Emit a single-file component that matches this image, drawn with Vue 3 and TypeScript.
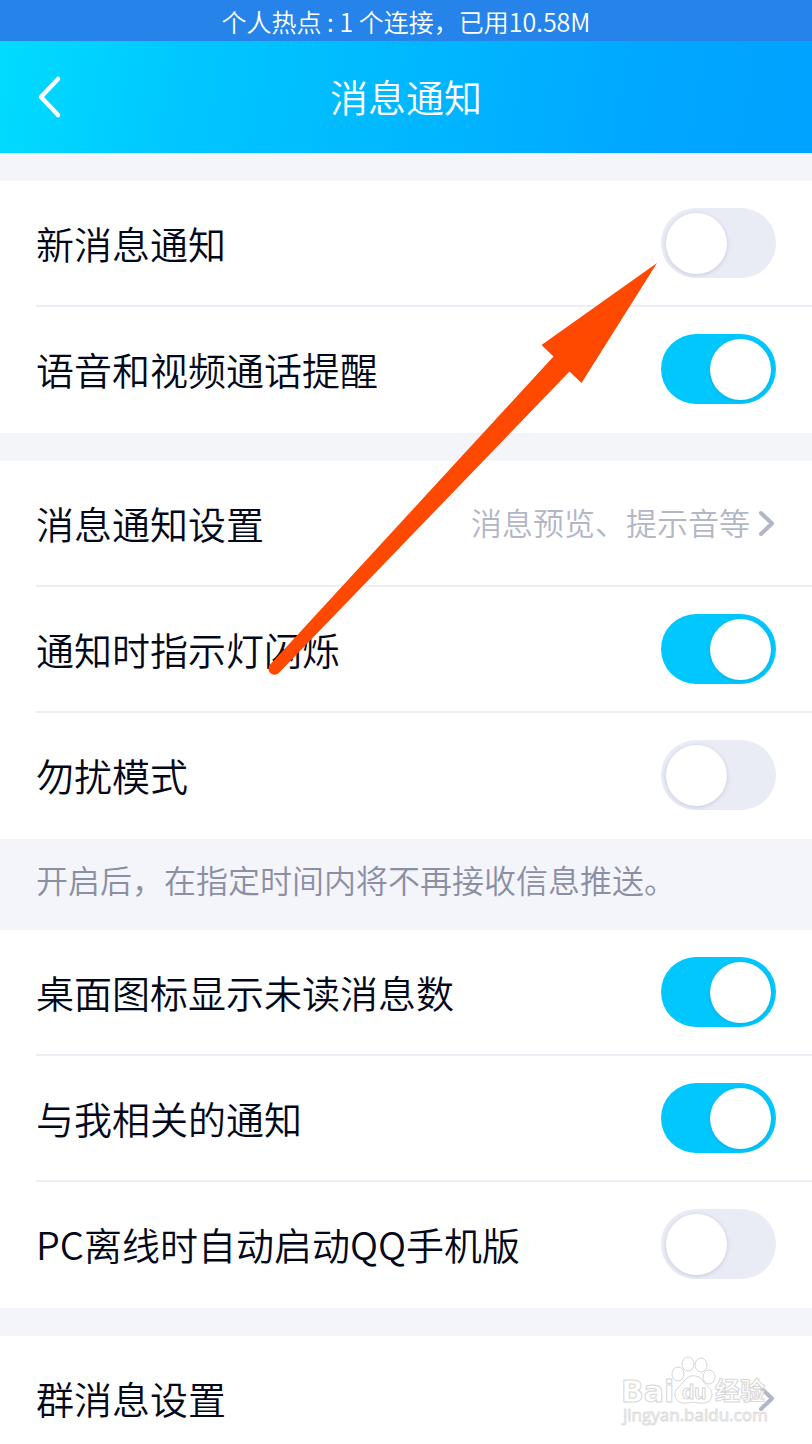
<script setup lang="ts">
import { reactive } from 'vue'

interface Item {
  id: string
  label: string
  kind: 'switch' | 'link'
  on?: boolean
  detail?: string
}

interface Section {
  items: Item[]
  note?: string
}

const sections = reactive<Section[]>([
  {
    items: [
      { id: 'new-message', label: '新消息通知', kind: 'switch', on: false },
      { id: 'calls', label: '语音和视频通话提醒', kind: 'switch', on: true },
    ],
  },
  {
    items: [
      { id: 'settings', label: '消息通知设置', kind: 'link', detail: '消息预览、提示音等' },
      { id: 'led', label: '通知时指示灯闪烁', kind: 'switch', on: true },
      { id: 'dnd', label: '勿扰模式', kind: 'switch', on: false },
    ],
    note: '开启后，在指定时间内将不再接收信息推送。',
  },
  {
    items: [
      { id: 'badge', label: '桌面图标显示未读消息数', kind: 'switch', on: true },
      { id: 'related', label: '与我相关的通知', kind: 'switch', on: true },
      { id: 'pc-offline', label: 'PC离线时自动启动QQ手机版', kind: 'switch', on: false },
    ],
  },
  {
    items: [{ id: 'group', label: '群消息设置', kind: 'link' }],
  },
])
</script>

<template>
  <div class="page">
    <div class="status">个人热点 : 1 个连接，已用10.58M</div>
    <header class="bar">
      <button class="back" type="button" aria-label="返回">
        <svg width="28" height="44" viewBox="0 0 28 44" fill="none">
          <path d="M23 4 6 22l17 18" stroke="#fff" stroke-width="4.500" stroke-linecap="round" stroke-linejoin="round" />
        </svg>
      </button>
      <h1 class="title">消息通知</h1>
    </header>

    <main class="content">
      <template v-for="(section, i) in sections" :key="i">
        <section class="group">
          <template v-for="item in section.items" :key="item.id">
            <label v-if="item.kind === 'switch'" class="row" :for="item.id">
              <span class="name">{{ item.label }}</span>
              <input :id="item.id" v-model="item.on" class="switch" type="checkbox" />
            </label>
            <a v-else class="row" :href="'#' + item.id">
              <span class="name">{{ item.label }}</span>
              <span v-if="item.detail" class="detail">{{ item.detail }}</span>
              <svg class="chevron" width="20" height="30" viewBox="0 0 20 30" fill="none">
                <path d="M5 5l11 10.500L5 26" stroke="#b3b6c6" stroke-width="4" stroke-linecap="round" stroke-linejoin="round" />
              </svg>
            </a>
          </template>
        </section>
        <p v-if="section.note" class="note">{{ section.note }}</p>
        <div v-else class="gap"></div>
      </template>
    </main>

    <svg class="pointer" width="390" height="412" viewBox="0 0 390 412" aria-hidden="true">
      <path d="M390 0 274.500 82l12 11.500L3.200 401.500a6 6 0 0 0 8.600 8.600L302.500 108.500l12 11.500z" fill="#ff4800" />
    </svg>

    <svg class="watermark" width="160" height="76" viewBox="0 0 160 76" aria-hidden="true">
      <g class="outline">
        <text class="brand wide" x="3" y="48" font-size="30">Bai</text>
        <ellipse cx="60" cy="20" rx="6" ry="7" />
        <ellipse cx="70" cy="10" rx="6" ry="7" />
        <ellipse cx="83" cy="11" rx="6" ry="7" />
        <ellipse cx="91" cy="23" rx="6" ry="7" />
        <path d="M66 27c5-7 14-7 19 0 2 4 9 7 9 13 0 8-7 10-13 9-4-1-7-1-11 0-6 1-13-1-13-9 0-6 7-9 9-13z" />
        <text class="brand" x="64" y="45" font-size="20">du</text>
        <text class="brand" x="97" y="46" font-size="25">经验</text>
      </g>
      <text class="site" x="5" y="67" font-size="17">jingyan.baidu.com</text>
    </svg>
  </div>
</template>

<style>
body {
  margin: 0;
}
</style>

<style scoped>
.page {
  position: relative;
  display: flex;
  flex-direction: column;
  height: 100vh;
  overflow: hidden;
  background: #f4f5fa;
  color: #03081a;
  font-family: "Noto Sans CJK SC", sans-serif;
  font-weight: 350;
}

.status {
  flex: none;
  height: 41px;
  background: #2683e9;
  color: #fff;
  font-size: 25px;
  line-height: 42px;
  text-align: center;
}

.bar {
  flex: none;
  display: grid;
  grid-template-columns: 100px 1fr 100px;
  align-items: center;
  height: 112px;
  background: linear-gradient(100deg, #00dcff 0%, #00c6ff 24%, #00b8ff 50%, #00a6ff 82%, #00a3ff 100%);
  color: #fff;
}

.back {
  display: flex;
  align-items: center;
  height: 100%;
  padding: 0 0 0 35px;
  border: 0;
  background: none;
}

.title {
  margin: 0;
  padding-bottom: 2px;
  font-size: 38px;
  font-weight: 350;
  line-height: 56px;
  text-align: center;
}

.content {
  flex: 1;
  min-height: 0;
  padding-top: 28px;
  overflow: hidden;
}

.group {
  padding-left: 36px;
  background: #fff;
}

.row {
  display: flex;
  align-items: center;
  box-sizing: border-box;
  height: 126px;
  padding-right: 36px;
  border-bottom: 2px solid #ecedf5;
  color: inherit;
  text-decoration: none;
}

.row:last-child {
  border-bottom-color: transparent;
}

.name {
  flex: 1;
  font-size: 38px;
  line-height: 56px;
  white-space: nowrap;
}

.detail {
  margin-right: 6px;
  padding-bottom: 2px;
  color: #b3b6c6;
  font-size: 31px;
  line-height: 46px;
}

.chevron {
  flex: none;
}

.switch {
  appearance: none;
  flex: none;
  display: flex;
  align-items: center;
  box-sizing: border-box;
  width: 115px;
  height: 70px;
  margin: 0;
  padding: 0 5px;
  border-radius: 35px;
  background: #e9ebf5;
}

.switch::before {
  content: "";
  width: 61px;
  height: 61px;
  border-radius: 50%;
  background: #fff;
  box-shadow: 0 1px 4px rgba(60, 70, 130, 0.2);
}

.switch:checked {
  justify-content: flex-end;
  background: #00c8ff;
}

.note {
  box-sizing: border-box;
  min-height: 91px;
  margin: 0;
  padding: 17px 36px 28px;
  color: #8b8fa3;
  font-size: 32px;
  line-height: 46px;
}

.gap {
  height: 28px;
}

.pointer {
  position: absolute;
  top: 263px;
  right: 155px;
}

.watermark {
  position: absolute;
  right: 34px;
  bottom: 14px;
}

.outline {
  fill: #fff;
  stroke: #d6d6d6;
  stroke-width: 1px;
}

.brand {
  font-family: "Liberation Sans", "Noto Sans CJK SC", sans-serif;
  font-weight: 700;
}

.wide {
  font-family: "DejaVu Sans", sans-serif;
}

.site {
  fill: #fff;
  stroke: #dedede;
  stroke-width: 1px;
  font-family: "Open Sans", sans-serif;
  font-weight: 400;
}
</style>
